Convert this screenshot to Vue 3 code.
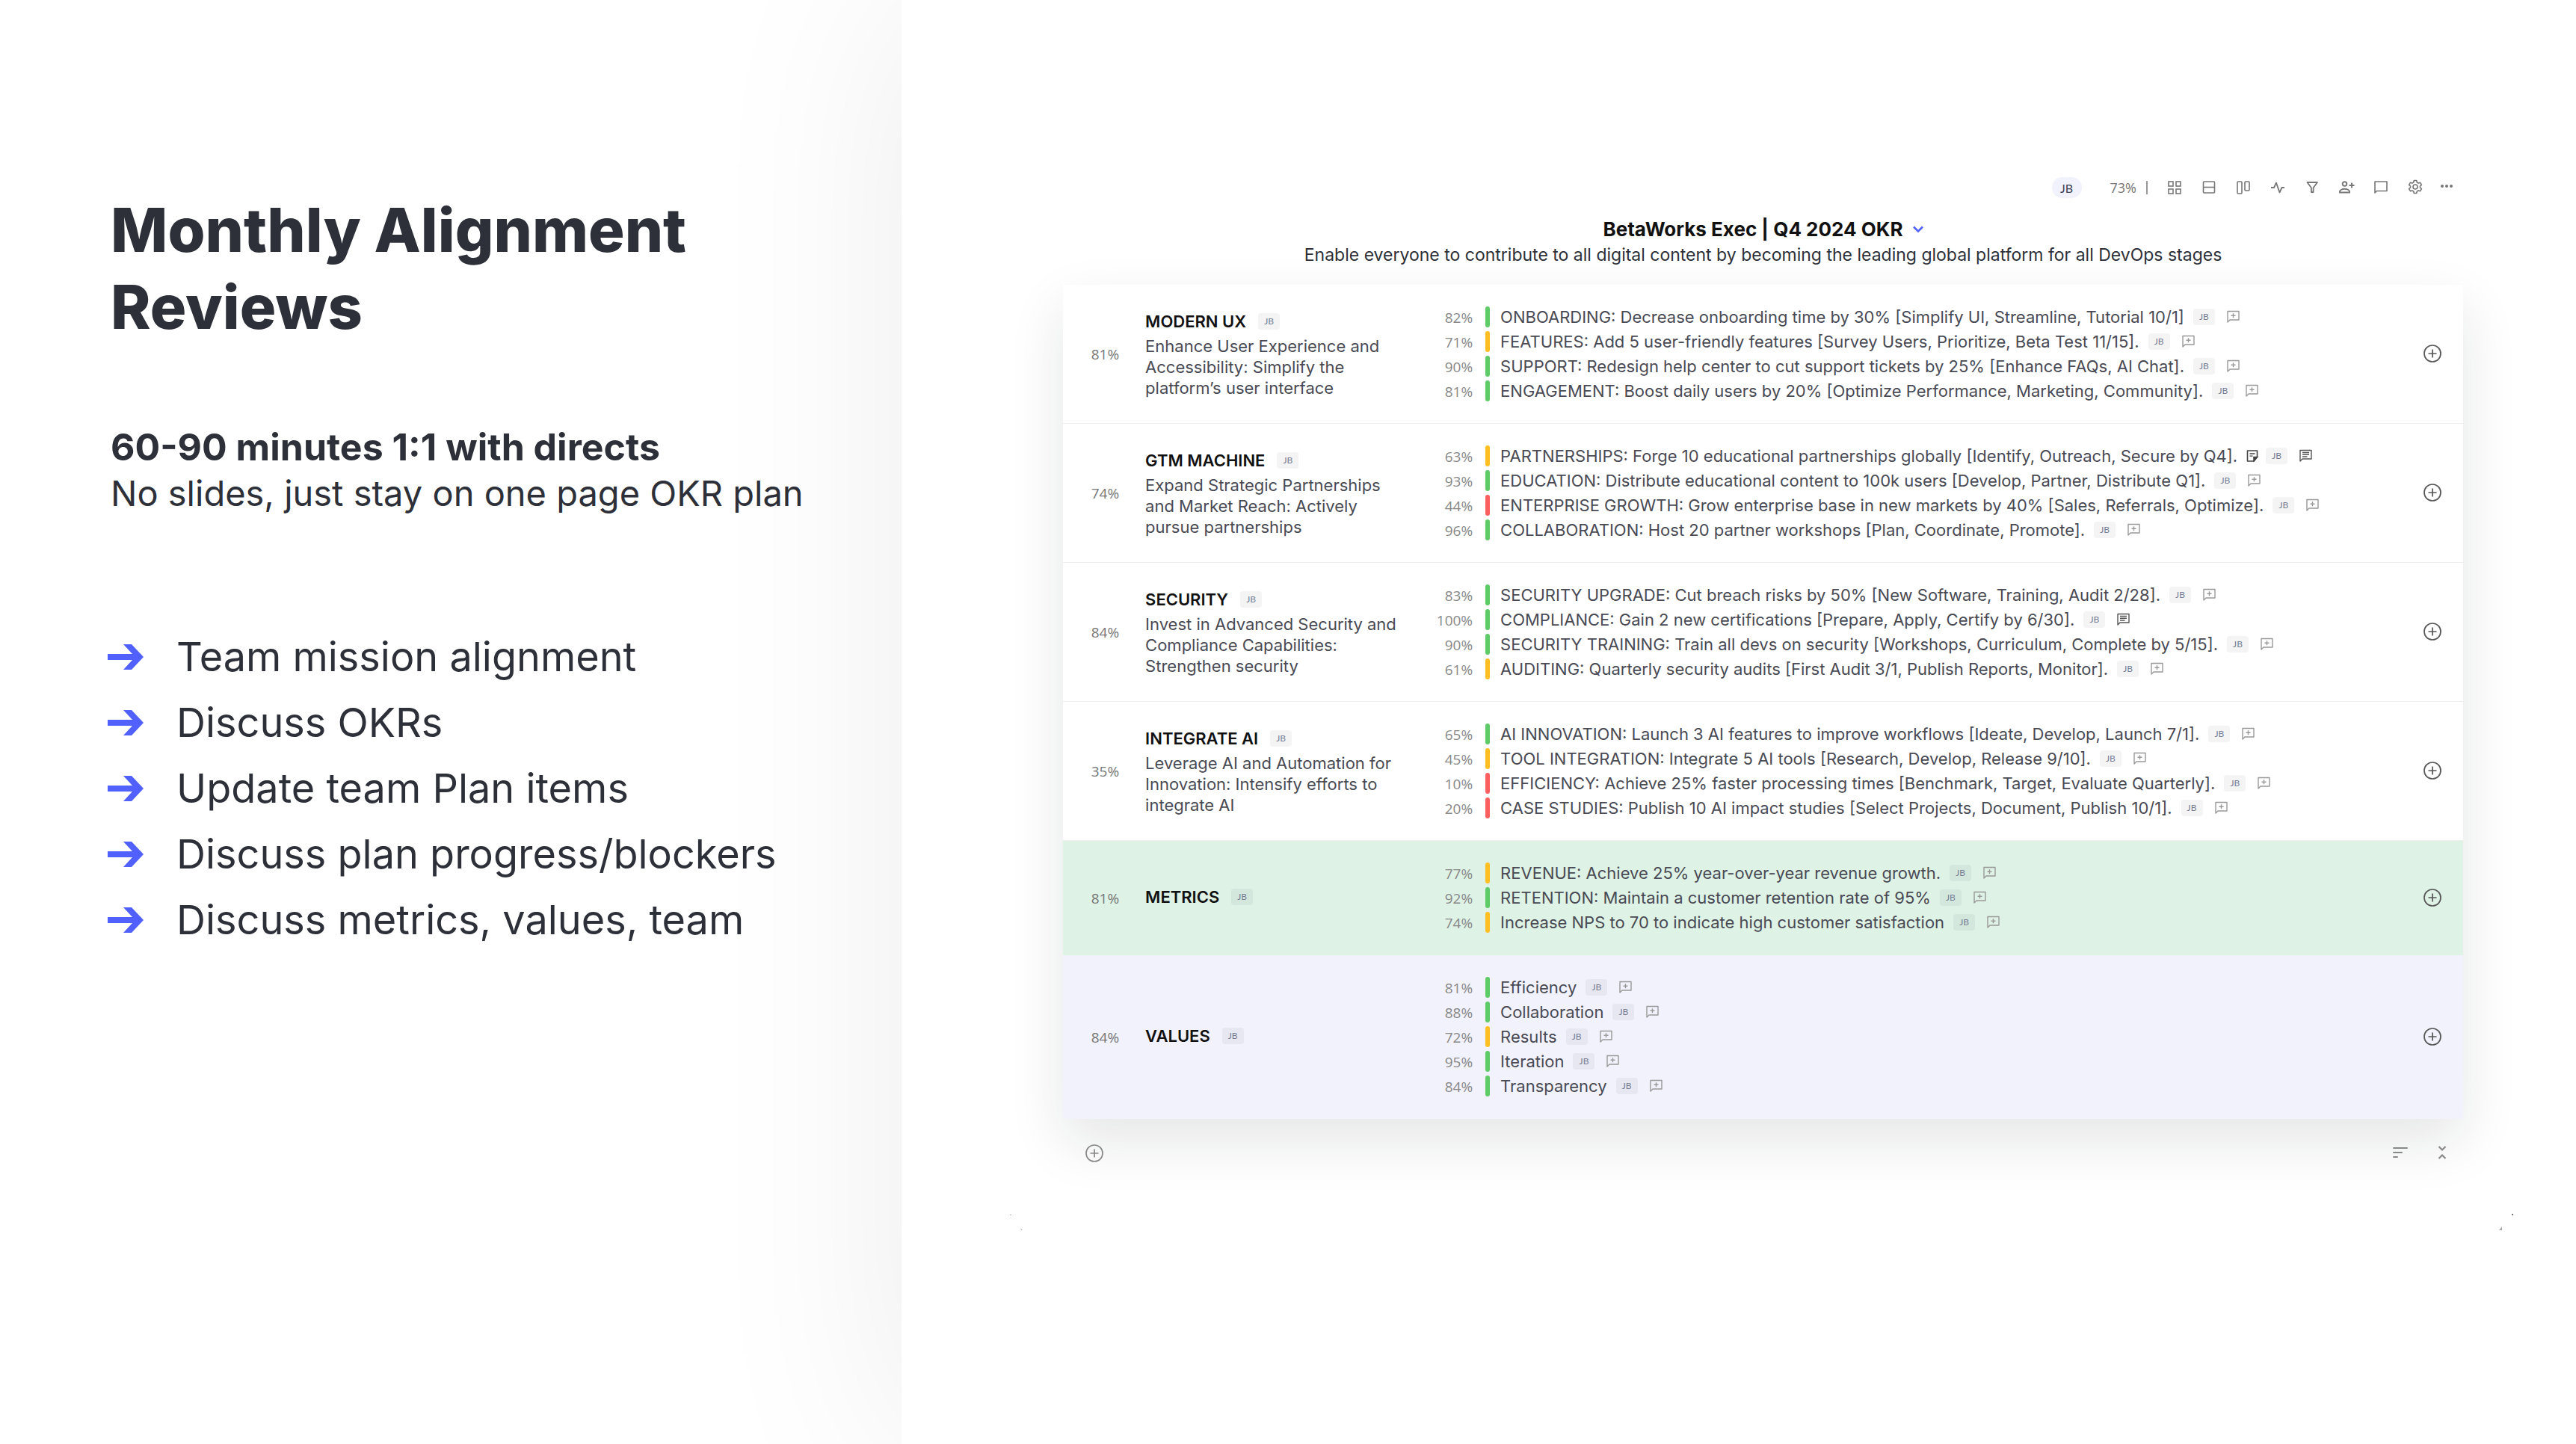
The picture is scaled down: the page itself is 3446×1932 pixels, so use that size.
<script setup>
const agenda = [
  'Team mission alignment',
  'Discuss OKRs',
  'Update team Plan items',
  'Discuss plan progress/blockers',
  'Discuss metrics, values, team'
]

const tools = ['grid', 'rows', 'columns', 'pulse', 'filter', 'invite', 'comment', 'settings', 'more']

const objectives = [
  {
    title: 'MODERN UX',
    progress: 81,
    text: 'Enhance User Experience and Accessibility: Simplify the platform’s user interface',
    results: [
      { progress: 82, status: 'good', text: 'ONBOARDING: Decrease onboarding time by 30% [Simplify UI, Streamline, Tutorial 10/1]' },
      { progress: 71, status: 'warn', text: 'FEATURES: Add 5 user-friendly features [Survey Users, Prioritize, Beta Test 11/15].' },
      { progress: 90, status: 'good', text: 'SUPPORT: Redesign help center to cut support tickets by 25% [Enhance FAQs, AI Chat].' },
      { progress: 81, status: 'good', text: 'ENGAGEMENT: Boost daily users by 20% [Optimize Performance, Marketing, Community].' }
    ]
  },
  {
    title: 'GTM MACHINE',
    progress: 74,
    text: 'Expand Strategic Partnerships and Market Reach: Actively pursue partnerships',
    results: [
      { progress: 63, status: 'warn', text: 'PARTNERSHIPS: Forge 10 educational partnerships globally [Identify, Outreach, Secure by Q4].', note: true, comments: true },
      { progress: 93, status: 'good', text: 'EDUCATION: Distribute educational content to 100k users [Develop, Partner, Distribute Q1].' },
      { progress: 44, status: 'bad', text: 'ENTERPRISE GROWTH: Grow enterprise base in new markets by 40% [Sales, Referrals, Optimize].' },
      { progress: 96, status: 'good', text: 'COLLABORATION: Host 20 partner workshops [Plan, Coordinate, Promote].' }
    ]
  },
  {
    title: 'SECURITY',
    progress: 84,
    text: 'Invest in Advanced Security and Compliance Capabilities: Strengthen security',
    results: [
      { progress: 83, status: 'good', text: 'SECURITY UPGRADE: Cut breach risks by 50% [New Software, Training, Audit 2/28].' },
      { progress: 100, status: 'good', text: 'COMPLIANCE: Gain 2 new certifications [Prepare, Apply, Certify by 6/30].', comments: true },
      { progress: 90, status: 'good', text: 'SECURITY TRAINING: Train all devs on security [Workshops, Curriculum, Complete by 5/15].' },
      { progress: 61, status: 'warn', text: 'AUDITING: Quarterly security audits [First Audit 3/1, Publish Reports, Monitor].' }
    ]
  },
  {
    title: 'INTEGRATE AI',
    progress: 35,
    text: 'Leverage AI and Automation for Innovation: Intensify efforts to integrate AI',
    results: [
      { progress: 65, status: 'good', text: 'AI INNOVATION: Launch 3 AI features to improve workflows [Ideate, Develop, Launch 7/1].' },
      { progress: 45, status: 'warn', text: 'TOOL INTEGRATION: Integrate 5 AI tools [Research, Develop, Release 9/10].' },
      { progress: 10, status: 'bad', text: 'EFFICIENCY: Achieve 25% faster processing times [Benchmark, Target, Evaluate Quarterly].' },
      { progress: 20, status: 'bad', text: 'CASE STUDIES: Publish 10 AI impact studies [Select Projects, Document, Publish 10/1].' }
    ]
  },
  {
    title: 'METRICS',
    progress: 81,
    theme: 'metrics',
    results: [
      { progress: 77, status: 'warn', text: 'REVENUE: Achieve 25% year-over-year revenue growth.' },
      { progress: 92, status: 'good', text: 'RETENTION: Maintain a customer retention rate of 95%' },
      { progress: 74, status: 'warn', text: 'Increase NPS to 70 to indicate high customer satisfaction' }
    ]
  },
  {
    title: 'VALUES',
    progress: 84,
    theme: 'values',
    results: [
      { progress: 81, status: 'good', text: 'Efficiency' },
      { progress: 88, status: 'good', text: 'Collaboration' },
      { progress: 72, status: 'warn', text: 'Results' },
      { progress: 95, status: 'good', text: 'Iteration' },
      { progress: 84, status: 'good', text: 'Transparency' }
    ]
  }
]
</script>

<template>
  <div class="slide">
    <aside class="intro">
      <h1>Monthly Alignment Reviews</h1>
      <p class="lead">
        <strong>60-90 minutes 1:1 with directs</strong>
        <span>No slides, just stay on one page OKR plan</span>
      </p>
      <ul class="agenda">
        <li v-for="item in agenda" :key="item">
          <svg class="arrow" viewBox="0 0 48 34" fill="#5161ff">
            <path d="M0 13h33L21 0h11l16 17-16 17H21l12-13H0z" />
          </svg>
          {{ item }}
        </li>
      </ul>
    </aside>

    <main class="board">
      <div class="toolbar">
        <button class="pill" type="button">JB</button>
        <span class="total">73%</span>
        <span class="divider"></span>
        <div class="tools">
          <button v-for="tool in tools" :key="tool" class="icon-button" type="button" :aria-label="tool">
            <svg viewBox="0 0 24 24" fill="none" stroke="currentColor" stroke-width="1.6">
              <template v-if="tool === 'grid'">
                <rect x="4" y="4" width="6" height="6" />
                <rect x="14" y="4" width="6" height="6" />
                <rect x="4" y="14" width="6" height="6" />
                <rect x="14" y="14" width="6" height="6" />
              </template>
              <template v-else-if="tool === 'rows'">
                <rect x="4.5" y="4" width="15" height="15" rx="1" />
                <path d="M4.5 11.5h15" />
              </template>
              <template v-else-if="tool === 'columns'">
                <rect x="4" y="4" width="6" height="16" rx="1" />
                <rect x="14" y="4" width="6" height="12" rx="1" />
              </template>
              <path v-else-if="tool === 'pulse'" d="M3 12h4l3-6.5 4.5 13L17.5 12H21" stroke-linejoin="round" stroke-width="1.8" />
              <path v-else-if="tool === 'filter'" d="M5.5 5H19l-5.400 7.200V18h-2.700v-5.800z" stroke-linejoin="round" stroke-width="1.8" />
              <template v-else-if="tool === 'invite'">
                <circle cx="9.5" cy="7" r="2.8" stroke-width="1.9" />
                <path d="M3 18.5v-1.300c0-2 3.300-3.400 6.500-3.400s6.500 1.400 6.500 3.400v1.300z" stroke-width="1.9" />
                <path d="M15.500 9h7M19 5.500v7" stroke-width="1.9" />
              </template>
              <path v-else-if="tool === 'comment'" d="M4 19V4h16v12.500H6.500z" stroke-linejoin="round" />
              <template v-else-if="tool === 'settings'">
                <circle cx="12" cy="11" r="3" />
                <path d="M10.300 2.500h3.400l.6 2.500 1.900 1.100 2.400-.8 1.800 3-1.900 1.700v2l1.900 1.700-1.800 3-2.400-.8-1.900 1.100-.6 2.500h-3.400l-.6-2.500-1.900-1.100-2.400.8-1.800-3L5.500 12v-2L3.600 8.300l1.800-3 2.400.8L9.700 5z" stroke-linejoin="round" />
              </template>
              <g v-else fill="currentColor" stroke="none">
                <circle cx="6" cy="10" r="2" />
                <circle cx="12" cy="10" r="2" />
                <circle cx="18" cy="10" r="2" />
              </g>
            </svg>
          </button>
        </div>
      </div>

      <header class="heading">
        <h2>
          <button class="plan-switch" type="button">
            BetaWorks Exec | Q4 2024 OKR
            <svg viewBox="0 0 14 10" fill="none" stroke="#5161ff" stroke-width="2.6">
              <path d="M1 1.500l6 6 6-6" />
            </svg>
          </button>
        </h2>
        <p>Enable everyone to contribute to all digital content by becoming the leading global platform for all DevOps stages</p>
      </header>

      <div class="card">
        <section v-for="objective in objectives" :key="objective.title" class="objective" :class="objective.theme">
          <span class="percent">{{ objective.progress }}%</span>
          <div class="summary">
            <h3>{{ objective.title }} <span class="owner">JB</span></h3>
            <p v-if="objective.text">{{ objective.text }}</p>
          </div>
          <ul class="results">
            <li v-for="result in objective.results" :key="result.text">
              <span class="percent">{{ result.progress }}%</span>
              <span class="bar" :class="result.status"></span>
              <span class="result-text">{{ result.text }}</span>
              <svg v-if="result.note" class="note" viewBox="0 0 16 16" fill="none" stroke="currentColor" stroke-width="1.6">
                <path d="M1.500 1h13v8.500L10 15H1.500z" stroke-linejoin="round" />
                <path d="M14.500 9.500H10V15z" fill="currentColor" />
                <path d="M4.500 5h7M4.500 8.200h4" stroke-width="1.3" />
              </svg>
              <span class="owner">JB</span>
              <button class="comment" :class="{ filled: result.comments }" type="button" aria-label="Comments">
                <svg viewBox="0 0 17 17" fill="none" stroke="currentColor" stroke-width="1.4">
                  <path d="M1 16V1.500h15V13H4z" stroke-linejoin="round" />
                  <path v-if="result.comments" d="M4 4.500h9M4 7.200h9M4 10h6.500" />
                  <path v-else d="M5.500 7.200h6M8.500 4.200v6" />
                </svg>
              </button>
            </li>
          </ul>
          <button class="add" type="button" aria-label="Add key result">
            <svg viewBox="0 0 24 24" fill="none" stroke="currentColor" stroke-width="1.7">
              <circle cx="12" cy="12" r="11" />
              <path d="M6.500 12h11M12 6.500v11" />
            </svg>
          </button>
        </section>
      </div>

      <footer class="actions">
        <button class="add" type="button" aria-label="Add objective">
          <svg viewBox="0 0 24 24" fill="none" stroke="currentColor" stroke-width="1.7">
            <circle cx="12" cy="12" r="11" />
            <path d="M6.500 12h11M12 6.500v11" />
          </svg>
        </button>
        <div class="view-actions">
          <button class="icon-button" type="button" aria-label="Sort">
            <svg viewBox="0 0 24 24" fill="none" stroke="currentColor" stroke-width="2" stroke-linecap="round">
              <path d="M3 5h18M3 11h11M3 17h5" />
            </svg>
          </button>
          <button class="icon-button" type="button" aria-label="Collapse all">
            <svg viewBox="0 0 24 24" fill="none" stroke="currentColor" stroke-width="2.2">
              <path d="M7.500 3l4.500 4.500L16.500 3M7.500 19l4.500-4.500 4.500 4.500" />
            </svg>
          </button>
        </div>
      </footer>

      <div class="corners">
        <svg viewBox="0 0 20 24" fill="#b5b5b5">
          <path d="M1 1h2v1H1zM15 19l3 3h-2z" />
        </svg>
        <svg viewBox="0 0 20 24">
          <path d="M17 0h2v2h-2z" fill="#777" />
          <path d="M0 22l4-5v5z" fill="#aaa" />
        </svg>
      </div>
    </main>
  </div>
</template>

<style>
body {
  margin: 0;
  background: #fff;
}
</style>

<style scoped>
.slide {
  display: grid;
  grid-template-columns: 35fr 65fr;
  min-height: 100vh;
  overflow: hidden;
  font-family: "Inter", sans-serif;
  color: #2d3038;
}

h1, h2, h3, p, ul {
  margin: 0;
  padding: 0;
}

ul {
  list-style: none;
}

button {
  display: flex;
  align-items: center;
  justify-content: center;
  padding: 0;
  border: 0;
  background: none;
  font: inherit;
  color: inherit;
  cursor: pointer;
}

svg {
  display: block;
  flex: none;
}

/* Left column */
.intro {
  box-sizing: border-box;
  padding: 257px 80px 0 144px;
}

h1 {
  padding-left: 4px;
  font-size: 81px;
  line-height: 103px;
  font-weight: 800;
}

.lead {
  display: flex;
  flex-direction: column;
  margin-top: 104px;
  padding-left: 4px;
  font-size: 47px;
  line-height: 62px;
  white-space: nowrap;
}

.lead strong {
  font-size: 50px;
  font-weight: 700;
}

.agenda {
  margin-top: 144px;
  font-size: 54px;
  line-height: 88px;
  white-space: nowrap;
}

.agenda li {
  display: flex;
  align-items: center;
  gap: 44px;
}

.arrow {
  width: 48px;
}

/* Right column */
.board {
  position: relative;
  box-sizing: border-box;
  padding: 237px 151px 0 216px;
  background: #fff;
  box-shadow: 0 0 260px rgba(0, 0, 0, 0.08);
}

.toolbar {
  display: flex;
  align-items: center;
  justify-content: flex-end;
  padding-right: 10px;
  color: #777;
}

.pill {
  width: 40px;
  height: 28px;
  border-radius: 14px;
  background: #f2f2fd;
  font: 16px "Lato", sans-serif;
  color: #3c4257;
}

.total {
  margin-left: 38px;
  font: 18px "Open Sans", sans-serif;
}

.divider {
  width: 2px;
  height: 18px;
  margin: 0 24px 0 13px;
  background: #999;
}

.tools {
  display: flex;
  gap: 22px;
}

.tools .icon-button:last-child {
  margin-left: -4px;
}

.icon-button svg,
.add svg {
  width: 24px;
  height: 24px;
}

.heading {
  margin-top: 24px;
  text-align: center;
}

.heading h2 {
  display: flex;
  justify-content: center;
  font-size: 26px;
  line-height: 36px;
  font-weight: 700;
  color: #111;
}

.plan-switch {
  gap: 13px;
}

.plan-switch svg {
  width: 14px;
}

.heading p {
  font-size: 23px;
  line-height: 32px;
}

.card {
  margin-top: 24px;
  background: #fff;
  box-shadow: 0 30px 70px rgba(20, 28, 28, 0.11);
}

.objective {
  display: grid;
  grid-template-columns: 75px 350px minmax(0, 1fr) 24px;
  align-items: center;
  padding: 26px 29px 27px 0;
  border-bottom: 1px solid #eee;
}

.objective.metrics {
  background: #def2e5;
  border-color: #def2e5;
}

.objective.values {
  background: #f2f2fc;
  border-color: #f2f2fc;
}

.percent {
  padding-top: 2px;
  font: 19px "Open Sans", sans-serif;
  color: #777;
  text-align: right;
}

.summary {
  margin-left: 35px;
  margin-right: -35px;
  padding-bottom: 2px;
  font-size: 22px;
  line-height: 28px;
  color: #494a54;
}

.summary h3 {
  display: flex;
  align-items: center;
  gap: 16px;
  font-size: 22px;
  line-height: 36px;
  font-weight: 600;
  color: #111;
}

.summary p {
  margin-top: 1px;
}

.owner {
  display: flex;
  align-items: center;
  justify-content: center;
  width: 29px;
  height: 22px;
  border-radius: 4px;
  background: rgba(30, 35, 60, 0.05);
  font: 12px "Lato", sans-serif;
  color: #757d94;
}

.results {
  margin-left: 73px;
  font-size: 22px;
  color: #494a54;
}

.results li {
  display: flex;
  align-items: center;
  height: 33px;
  white-space: nowrap;
}

.results .percent {
  width: 50px;
  color: #888;
}

.bar {
  width: 6px;
  height: 28px;
  margin: 0 14px 0 17px;
  border-radius: 3px;
}

.bar.good {
  background: #5fcb68;
}

.bar.warn {
  background: #ffbf23;
}

.bar.bad {
  background: #fb5f5f;
}

.result-text {
  margin-right: 12px;
}

.note {
  width: 16px;
  margin-right: 10px;
  color: #444;
}

.comment {
  margin-left: 16px;
  color: #999;
}

.comment svg {
  width: 17px;
}

.comment.filled {
  color: #555;
}

.add {
  color: #555;
}

.actions {
  display: flex;
  align-items: center;
  justify-content: space-between;
  margin-top: 34px;
  padding: 0 16px 0 30px;
  color: #888;
}

.actions .add {
  color: #888;
}

.view-actions {
  display: flex;
  gap: 32px;
}

/* Marks just outside the card's lower corners */
.corners {
  display: flex;
  justify-content: space-between;
  margin: 69px -68px 0 -72px;
}

.corners svg {
  width: 20px;
  height: 24px;
}
</style>
